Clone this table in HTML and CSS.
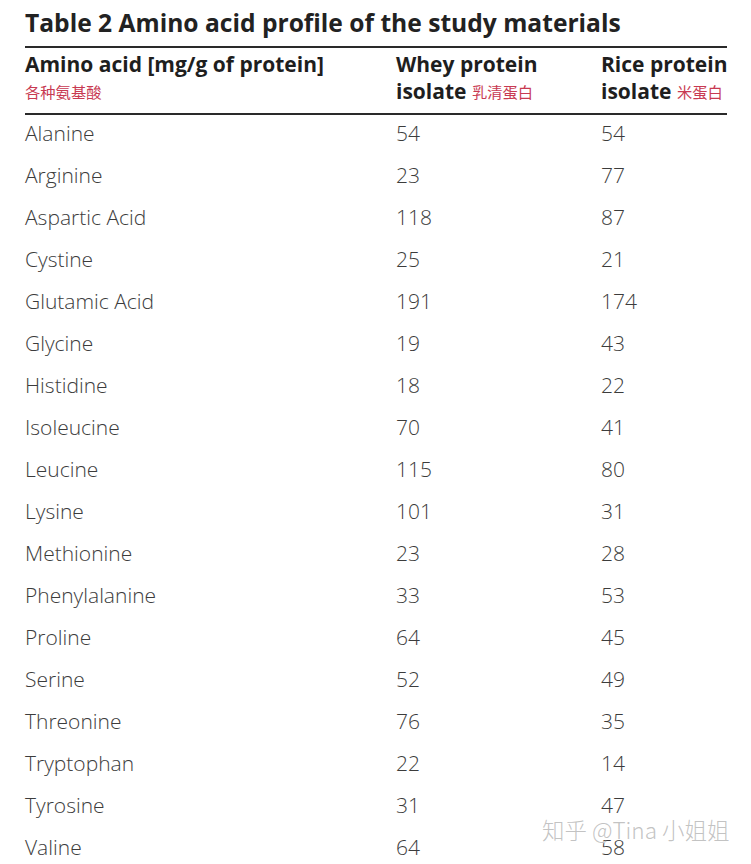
FILE: index.html
```html
<!DOCTYPE html>
<html lang="en">
<head>
<meta charset="utf-8">
<title>Table 2 Amino acid profile</title>
<link rel="stylesheet" href="styles.css">
</head>
<body>
<div class="page">
  <h1 class="title">Table 2 Amino acid profile of the study materials</h1>
  <div class="head">
    <div class="hcell">Amino acid [mg/g of protein]<br><span class="cn cn-only">各种氨基酸</span></div>
    <div class="hcell">Whey protein<br>isolate <span class="cn">乳清蛋白</span></div>
    <div class="hcell">Rice protein<br>isolate <span class="cn">米蛋白</span></div>
  </div>
  <div class="body">
    <div class="row"><span>Alanine</span><span>54</span><span>54</span></div>
    <div class="row"><span>Arginine</span><span>23</span><span>77</span></div>
    <div class="row"><span>Aspartic Acid</span><span>118</span><span>87</span></div>
    <div class="row"><span>Cystine</span><span>25</span><span>21</span></div>
    <div class="row"><span>Glutamic Acid</span><span>191</span><span>174</span></div>
    <div class="row"><span>Glycine</span><span>19</span><span>43</span></div>
    <div class="row"><span>Histidine</span><span>18</span><span>22</span></div>
    <div class="row"><span>Isoleucine</span><span>70</span><span>41</span></div>
    <div class="row"><span>Leucine</span><span>115</span><span>80</span></div>
    <div class="row"><span>Lysine</span><span>101</span><span>31</span></div>
    <div class="row"><span>Methionine</span><span>23</span><span>28</span></div>
    <div class="row"><span>Phenylalanine</span><span>33</span><span>53</span></div>
    <div class="row"><span>Proline</span><span>64</span><span>45</span></div>
    <div class="row"><span>Serine</span><span>52</span><span>49</span></div>
    <div class="row"><span>Threonine</span><span>76</span><span>35</span></div>
    <div class="row"><span>Tryptophan</span><span>22</span><span>14</span></div>
    <div class="row"><span>Tyrosine</span><span>31</span><span>47</span></div>
    <div class="row"><span>Valine</span><span>64</span><span>58</span></div>
  </div>
  <div class="watermark">知乎 @Tina 小姐姐</div>
</div>
</body>
</html>
```
FILE: styles.css
```css
html, body {
  margin: 0;
  padding: 0;
  background: #ffffff;
}
body {
  width: 751px;
  height: 864px;
  overflow: hidden;
  font-family: "Open Sans", "Noto Sans CJK SC", sans-serif;
}
.page {
  position: relative;
  padding: 0 24px 0 25px;
  height: 864px;
}
.title {
  margin: 0;
  padding: 8px 0 8px;
  font-size: 24.6px;
  line-height: 30px;
  font-weight: 700;
  color: #222222;
  border-bottom: 2px solid #2a2a2a;
}
.head {
  display: grid;
  grid-template-columns: 371px 205px 1fr;
  padding: 3px 0 8px;
  border-bottom: 2px solid #2a2a2a;
}
.hcell {
  font-size: 21px;
  line-height: 27px;
  font-weight: 700;
  color: #1e1e1e;
  white-space: nowrap;
}
.cn {
  font-family: "Noto Sans CJK SC", sans-serif;
  font-size: 15.3px;
  font-weight: 400;
  color: #c83a52;
  vertical-align: 1px;
}
.cn-only {
  display: inline-block;
  line-height: 22px;
}
.row {
  display: grid;
  grid-template-columns: 371px 205px 1fr;
  height: 42px;
  font-size: 21px;
  line-height: 36px;
  font-weight: 300;
  color: #3c3c3c;
}
.watermark {
  position: absolute;
  left: 542px;
  top: 814px;
  font-family: "Noto Sans CJK SC", sans-serif;
  font-size: 22.5px;
  line-height: 30px;
  font-weight: 300;
  color: rgba(175, 175, 175, 0.75);
  text-shadow: 0 0 1px #ffffff, 0 0 1px #ffffff;
  white-space: nowrap;
}
```
